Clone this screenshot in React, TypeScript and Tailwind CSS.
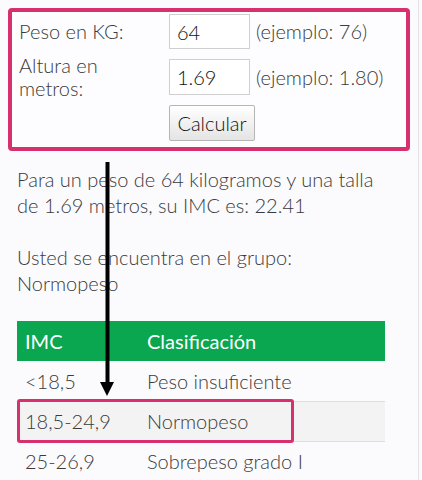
import React from 'react';

const rows = [
  { imc: '<18,5', label: 'Peso insuficiente' },
  { imc: '18,5-24,9', label: 'Normopeso' },
  { imc: '25-26,9', label: 'Sobrepeso grado I' },
];

export default function App() {
  return (
    <div className="relative h-[480px] w-[422px] overflow-hidden bg-[#fbfbfe] text-[#3a3a3a]" style={{ fontFamily: 'Lato, "Noto Sans", sans-serif' }}>
      <div className="h-full w-[419px] border-r border-[#e3e3e6] pt-[8px]">
        <form className="mx-[8px] rounded-[4px] border-[4px] border-[#d7306e] bg-[#fdfdff] px-[7px] pb-[6px] pt-[2px]" onSubmit={(e) => e.preventDefault()}>
          <div className="grid grid-cols-[150px_81px_1fr] items-center gap-y-[5px] text-[20px] font-light leading-[23px]">
            <div>Peso en KG:</div>
            <input defaultValue="64" className="h-[35px] w-[81px] border border-[#cfcfcf] bg-white px-[7px] text-[20px] text-[#111] outline-none" />
            <div className="pl-[6px]">(ejemplo: 76)</div>
            <div>Altura en<br />metros:</div>
            <input defaultValue="1.69" className="h-[36px] w-[81px] border border-[#cfcfcf] bg-white px-[7px] text-[20px] text-[#111] outline-none" />
            <div className="pl-[6px]">(ejemplo: 1.80)</div>
            <div />
            <button className="h-[36px] w-[86px] rounded-[2px] border border-[#b5b5b5] bg-gradient-to-b from-white to-[#e4e4e4] text-[20px] font-light text-[#111]">Calcular</button>
            <div />
          </div>
        </form>

        <div className="px-[17px] pt-[15px] text-[20px] font-light leading-[26px]">
          <p>Para un peso de 64 kilogramos y una talla<br />de 1.69 metros, su IMC es: 22.41</p>
          <p className="mt-[26px]">Usted se encuentra en el grupo:<br />Normopeso</p>
        </div>

        <table className="ml-[17px] mt-[25px] w-[368px] border-collapse text-left text-[20px] font-light">
          <thead>
            <tr className="h-[40px] bg-[#0aa650] text-white">
              <th className="w-[130px] pl-[8px] font-normal">IMC</th>
              <th className="font-normal">Clasificación</th>
            </tr>
          </thead>
          <tbody>
            {rows.map((r, i) => (
              <tr key={r.imc} className={`h-[40px] border-b border-[#dedede] ${i === 1 ? 'bg-[#f3f3f4]' : ''}`}>
                <td className="pl-[8px]">{r.imc}</td>
                <td>{r.label}</td>
              </tr>
            ))}
          </tbody>
        </table>
      </div>

      <div className="pointer-events-none absolute left-[17px] top-[399px] h-[44px] w-[277px] rounded-[3px] border-[3px] border-[#d7306e]" />

      <svg className="pointer-events-none absolute left-[100px] top-[162px]" width="14" height="235" viewBox="0 0 14 235">
        <rect x="5.5" y="0" width="4" height="222" fill="#000" />
        <polygon points="0,220 14,220 7,234" fill="#000" />
      </svg>
    </div>
  );
}
